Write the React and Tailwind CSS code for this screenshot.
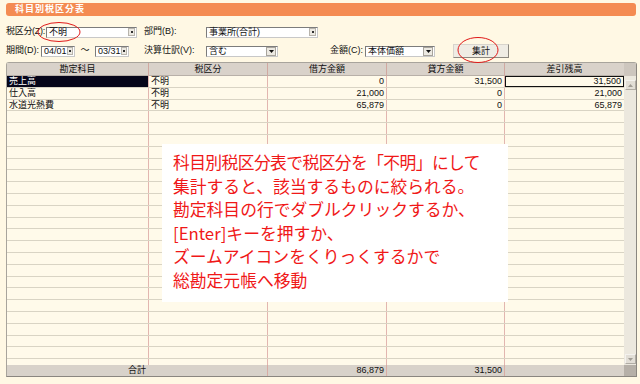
import React from "react";

const rows = [
  { name: "売上高", tax: "不明", debit: "0", credit: "31,500", bal: "31,500" },
  { name: "仕入高", tax: "不明", debit: "21,000", credit: "0", bal: "21,000" },
  { name: "水道光熱費", tax: "不明", debit: "65,879", credit: "0", bal: "65,879" },
];
while (rows.length < 25) rows.push({ name: "", tax: "", debit: "", credit: "", bal: "" });

function DotButton() {
  return (
    <span className="w-[7px] h-[8px] mr-[1px] bg-[#ece9e2] border border-[#b8b4ac] flex items-center justify-center">
      <span className="w-[2px] h-[2px] bg-[#303030]" />
    </span>
  );
}

function ArrowButton() {
  return (
    <span className="w-[10px] h-[9px] mr-[1px] bg-[#ece9e2] border border-[#a8a49c] flex items-center justify-center">
      <svg width="5" height="3" viewBox="0 0 5 3"><path d="M0 0h5L2.5 3z" fill="#111" /></svg>
    </span>
  );
}

function Field({ w, value, big }) {
  return (
    <div className={`${w} shrink-0 h-[11px] bg-white border border-[#7c7c7c] border-r-[#c8c8c8] border-b-[#c8c8c8] flex items-center justify-between`}>
      <span className="pl-[2px] leading-none">{value}</span>
      {big ? <ArrowButton /> : <DotButton />}
    </div>
  );
}

export default function App() {
  const cell = "border-r border-[#e2b6b0] px-[2px] truncate";
  return (
    <div className="relative w-[640px] h-[384px] overflow-hidden whitespace-nowrap bg-[#fff8e4] text-[9px] text-[#111] font-['Liberation_Sans','Noto_Sans_CJK_JP',sans-serif]">
      <div className="pt-[3px] pl-[6px] pr-[4px]">
        <div className="h-[13px] rounded-[3px] bg-[#f48b52] text-white font-bold text-[9px] tracking-[1px] pl-[9px] flex items-center">
          科目別税区分表
        </div>
      </div>

      <div className="flex items-center h-[12px] mt-[10px] pl-[6px]">
        <span className="w-[40px] shrink-0 tracking-[-0.3px]">税区分(Z):</span>
        <Field w="w-[91px]" value="不明" />
        <span className="w-[62px] shrink-0 ml-[7px]">部門(B):</span>
        <Field w="w-[112px]" value="事業所(合計)" />
      </div>

      <div className="flex items-center h-[12px] mt-[7px] pl-[6px]">
        <span className="w-[35px] shrink-0">期間(D):</span>
        <Field w="w-[34px]" value="04/01" />
        <span className="w-[20px] shrink-0 text-center">～</span>
        <Field w="w-[34px]" value="03/31" />
        <span className="w-[15px] shrink-0" />
        <span className="w-[62px] shrink-0">決算仕訳(V):</span>
        <Field w="w-[72px]" value="含む" big />
        <span className="w-[52px] shrink-0" />
        <span className="w-[35px] shrink-0">金額(C):</span>
        <Field w="w-[70px]" value="本体価額" big />
        <span className="w-[18px] shrink-0" />
        <button className="w-[56px] shrink-0 h-[14px] bg-[#efece4] border border-[#d8d4cc] border-r-[#8c8880] border-b-[#8c8880] text-[9px] leading-none">
          集計
        </button>
      </div>

      <div className="ml-[6px] mt-[5px] w-[631px] h-[315px] border border-[#a8a49c] border-r-[#8a8680] border-b-[#8a8680] rounded-tl-[3px] rounded-tr-[3px] flex flex-col bg-[#fffaea]">
        <div className="h-[13px] grid grid-cols-[142px_119px_119px_118px_119px_12px] bg-[#d9d2ca] border-b border-[#b8b0a8] items-center text-center">
          <span className="border-r border-[#d0a8a0] h-full flex items-center justify-center">勘定科目</span>
          <span className="border-r border-[#d0a8a0] h-full flex items-center justify-center">税区分</span>
          <span className="border-r border-[#d0a8a0] h-full flex items-center justify-center">借方金額</span>
          <span className="border-r border-[#d0a8a0] h-full flex items-center justify-center">貸方金額</span>
          <span className="h-full flex items-center justify-center">差引残高</span>
          <span className="h-full bg-[#cdc6be]" />
        </div>

        <div className="flex-1 flex overflow-hidden">
          <div className="flex-1 overflow-hidden">
            {rows.map((r, i) => (
              <div key={i} className="h-[11.8px] grid grid-cols-[142px_119px_119px_118px_119px] border-b border-[#d9d4c4] leading-[10.8px]">
                <span className={`${cell} ${i === 0 ? "bg-[#06061a] text-white" : ""}`}>{r.name}</span>
                <span className={cell}>{r.tax}</span>
                <span className={`${cell} text-right`}>{r.debit}</span>
                <span className={`${cell} text-right`}>{r.credit}</span>
                <span className={`px-[2px] text-right ${i === 0 ? "border border-[#111] leading-[8.8px]" : ""}`}>{r.bal}</span>
              </div>
            ))}
          </div>
          <div className="w-[12px] bg-[#ece8de] flex flex-col justify-between items-center pt-[4px] pb-[1px]">
            <span className="w-[11px] h-[10px] bg-[#e2ded6] border border-[#f4f2ee] border-r-[#b0aca4] border-b-[#b0aca4] flex items-center justify-center">
              <svg width="5" height="3" viewBox="0 0 5 3"><path d="M0 3h5L2.5 0z" fill="#a09c94" /></svg>
            </span>
            <span className="w-[11px] h-[10px] bg-[#e2ded6] border border-[#f4f2ee] border-r-[#b0aca4] border-b-[#b0aca4] flex items-center justify-center">
              <svg width="5" height="3" viewBox="0 0 5 3"><path d="M0 0h5L2.5 3z" fill="#a09c94" /></svg>
            </span>
          </div>
        </div>

        <div className="h-[11px] grid grid-cols-[261px_119px_118px_119px_12px] bg-[#d8d2ca] leading-[11px]">
          <span className="border-r border-[#d8aca4] text-center">合計</span>
          <span className="border-r border-[#d8aca4] text-right px-[2px]">86,879</span>
          <span className="border-r border-[#d8aca4] text-right px-[2px]">31,500</span>
          <span />
          <span className="bg-[#b6b0a8]" />
        </div>
      </div>

      <div className="absolute left-[162px] top-[144px] w-[346px] h-[158px] bg-white pl-[11px] pt-[7px] text-[16.8px] leading-[23.5px] text-[#f01818] font-['Noto_Sans_CJK_JP',sans-serif]">
        <p className="tracking-[-0.6px]">科目別税区分表で税区分を「不明」にして</p>
        <p>集計すると、該当するものに絞られる。</p>
        <p>勘定科目の行でダブルクリックするか、</p>
        <p>[Enter]キーを押すか、</p>
        <p>ズームアイコンをくりっくするかで</p>
        <p>総勘定元帳へ移動</p>
      </div>

      <svg className="absolute inset-0 pointer-events-none" width="640" height="384">
        <ellipse cx="59" cy="32" rx="21" ry="9.5" fill="none" stroke="#e01818" strokeWidth="1" />
        <ellipse cx="478" cy="50" rx="20" ry="12.5" fill="none" stroke="#e01818" strokeWidth="1" />
      </svg>
    </div>
  );
}
